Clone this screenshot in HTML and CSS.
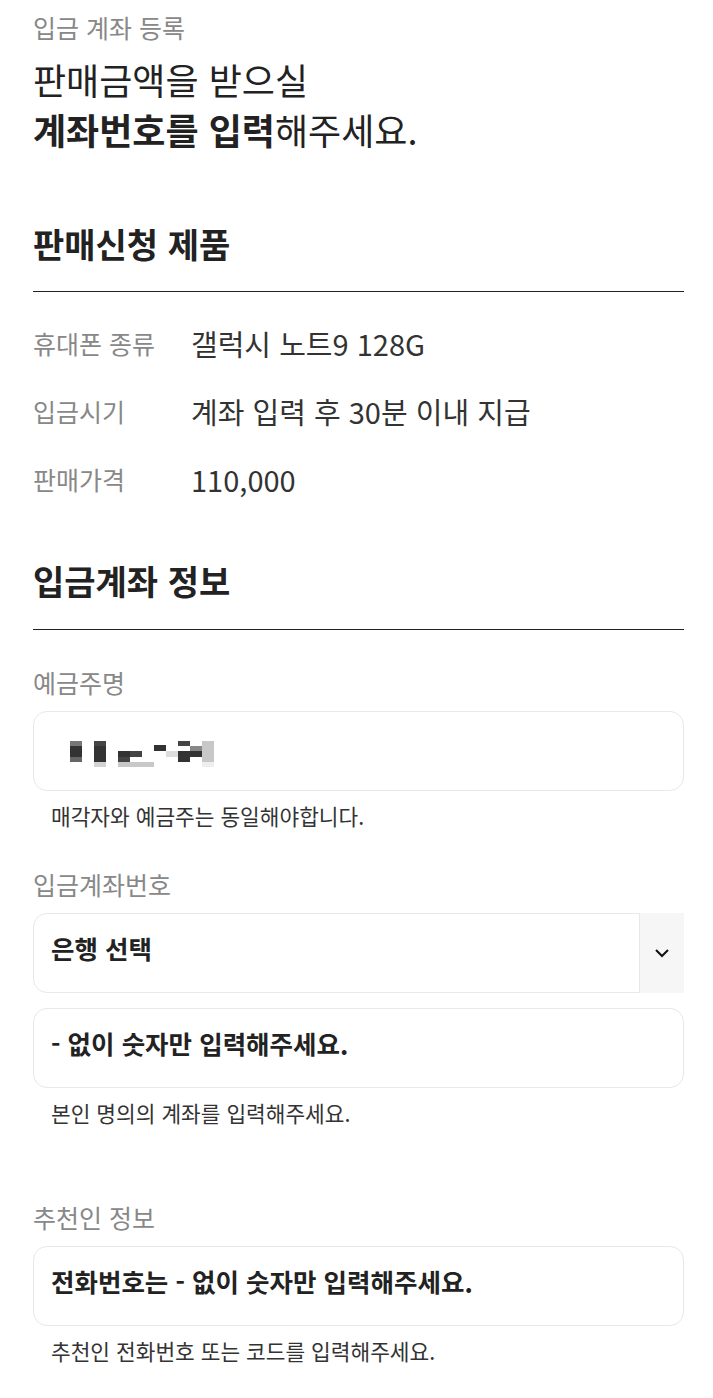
FILE: index.html
```html
<!DOCTYPE html>
<html lang="ko">
<head>
    <meta charset="UTF-8">
    <meta name="viewport" content="width=device-width, initial-scale=1.0">
    <title>입금 계좌 등록</title>
    <link rel="stylesheet" href="styles.css">
</head>
<body>

    <header class="intro">
        <p class="eyebrow">입금 계좌 등록</p>
        <h1 class="title">판매금액을 받으실<br><strong>계좌번호를 입력</strong>해주세요.</h1>
    </header>

    <section class="product">
        <h2 class="section-title">판매신청 제품</h2>
        <dl class="info">
            <div class="info-row">
                <dt>휴대폰 종류</dt>
                <dd>갤럭시 노트9 128G</dd>
            </div>
            <div class="info-row">
                <dt>입금시기</dt>
                <dd>계좌 입력 후 30분 이내 지급</dd>
            </div>
            <div class="info-row">
                <dt>판매가격</dt>
                <dd>110,000</dd>
            </div>
        </dl>
    </section>

    <section class="account">
        <h2 class="section-title">입금계좌 정보</h2>

        <div class="field">
            <label class="field-label">예금주명</label>
            <div class="box">
                <!-- blurred owner name -->
                <svg class="mosaic" width="144" height="28" viewBox="0 0 144 28">
                    <rect x="0" y="1" width="12" height="5" fill="#777"/>
                    <rect x="0" y="6" width="12" height="11" fill="#333"/>
                    <rect x="0" y="17" width="12" height="5" fill="#666"/>
                    <rect x="24" y="1" width="12" height="5" fill="#444"/>
                    <rect x="24" y="6" width="12" height="16" fill="#333"/>
                    <rect x="24" y="22" width="12" height="5" fill="#d2d2d2"/>
                    <rect x="48" y="11" width="12" height="6" fill="#333"/>
                    <rect x="48" y="17" width="12" height="5" fill="#444"/>
                    <rect x="60" y="11" width="12" height="6" fill="#444"/>
                    <rect x="48" y="22" width="36" height="5" fill="#c8c8c8"/>
                    <rect x="84" y="5" width="12" height="6" fill="#333"/>
                    <rect x="96" y="11" width="12" height="6" fill="#ddd"/>
                    <rect x="108" y="1" width="12" height="5" fill="#444"/>
                    <rect x="108" y="11" width="12" height="6" fill="#333"/>
                    <rect x="108" y="17" width="12" height="5" fill="#333"/>
                    <rect x="120" y="6" width="12" height="5" fill="#888"/>
                    <rect x="120" y="11" width="12" height="6" fill="#333"/>
                    <rect x="132" y="1" width="12" height="21" fill="#c8c8c8"/>
                    <rect x="132" y="22" width="12" height="5" fill="#eee"/>
                </svg>
            </div>
            <p class="help">매각자와 예금주는 동일해야합니다.</p>
        </div>

        <div class="field">
            <label class="field-label">입금계좌번호</label>
            <div class="box select">
                <span class="value">은행 선택</span>
                <span class="select-btn">
                    <svg width="16" height="10" viewBox="0 0 16 10">
                        <path d="M2 2l6 6 6-6" fill="none" stroke="#111" stroke-width="2"/>
                    </svg>
                </span>
            </div>
            <div class="box">
                <span class="value">- 없이 숫자만 입력해주세요.</span>
            </div>
            <p class="help">본인 명의의 계좌를 입력해주세요.</p>
        </div>

        <div class="field referrer">
            <label class="field-label">추천인 정보</label>
            <div class="box">
                <span class="value">전화번호는 - 없이 숫자만 입력해주세요.</span>
            </div>
            <p class="help">추천인 전화번호 또는 코드를 입력해주세요.</p>
        </div>
    </section>

</body>
</html>
```

FILE: styles.css
```css
*{
    margin: 0;
    padding: 0;
    box-sizing: border-box;
}
html{
    font-family: "Noto Sans CJK KR", "Noto Sans", sans-serif;
}
body{
    background: #fff;
    color: #222;
    padding: 10px 29px 30px 33px;
}
.eyebrow{
    font-size: 25px;
    line-height: 34px;
    color: #888;
}
.title{
    margin-top: 10px;
    font-size: 36px;
    line-height: 50px;
    font-weight: 400;
    color: #222;
}
.title strong{
    font-weight: 700;
}
.section-title{
    font-size: 34px;
    line-height: 44px;
    font-weight: 700;
    color: #222;
    padding-bottom: 25px;
    border-bottom: 1px solid #222;
}
.product{
    margin-top: 68px;
}
.info{
    padding-top: 17px;
}
.info-row{
    display: flex;
    align-items: center;
    height: 68px;
}
.info-row dt{
    width: 158px;
    font-size: 25px;
    color: #888;
}
.info-row dd{
    font-size: 29px;
    color: #333;
}
.account{
    margin-top: 46px;
}
.account .section-title{
    padding-bottom: 26px;
}
.field{
    display: flex;
    flex-direction: column;
    margin-top: 36px;
}
.account .section-title + .field{
    margin-top: 35px;
}
.field.referrer{
    margin-top: 72px;
}
.field-label{
    font-size: 25px;
    line-height: 34px;
    color: #888;
    margin-bottom: 12px;
}
.box{
    position: relative;
    display: flex;
    align-items: center;
    height: 80px;
    padding: 0 17px 12px;
    border: 1px solid #e8e8e8;
    border-radius: 14px;
    background: #fff;
}
.box + .box{
    margin-top: 15px;
}
.mosaic{
    display: block;
    margin-left: 19px;
    margin-top: 18px;
}
.value{
    font-size: 25.5px;
    font-weight: 700;
    color: #222;
}
.select-btn{
    position: absolute;
    top: -1px;
    right: -1px;
    bottom: -1px;
    width: 45px;
    display: flex;
    align-items: center;
    justify-content: center;
    background: #f6f6f6;
    border-left: 1px solid #e8e8e8;
}
.select-btn svg{
    display: block;
}
.help{
    margin-top: 10px;
    padding-left: 18px;
    font-size: 21.4px;
    line-height: 30px;
    color: #333;
}
```
